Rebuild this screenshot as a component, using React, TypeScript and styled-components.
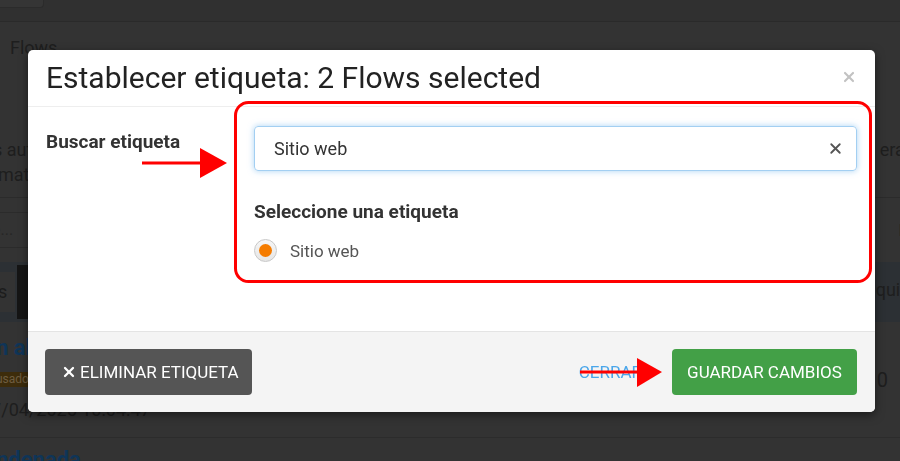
import React from "react";
import styled, { createGlobalStyle } from "styled-components";
import { X } from "lucide-react";

const GlobalStyle = createGlobalStyle`
  html, body { margin: 0; padding: 0; background: #333; }
  body { font-family: Roboto, "Liberation Sans", Arial, sans-serif; }
  * { box-sizing: border-box; }
`;

/* ---------- background page (dimmed behind the dialog) ---------- */
const Page = styled.div`
  width: 900px;
  height: 461px;
  overflow: hidden;
  background: #333;
  color: #1e1e1e;
  font-family: Roboto, "Liberation Sans", sans-serif;
`;
const TopBar = styled.div`
  height: 22px;
  background: #303030;
  border-bottom: 1px solid #2a2a2a;
`;
const TopBarTab = styled.div`
  width: 44px;
  height: 8px;
  background: #353535;
  border-right: 1px solid #2b2b2b;
  border-bottom: 1px solid #2b2b2b;
  border-radius: 0 0 4px 0;
`;
const PageTitle = styled.h1`
  margin: 0;
  padding: 14px 10px 0;
  font-size: 18px;
  font-weight: 400;
  line-height: 24px;
`;
const Intro = styled.div`
  margin-top: 77px;
  padding-bottom: 10px;
  border-bottom: 1px solid #2b2b2b;
`;
const EdgeLine = styled.div`
  display: flex;
  justify-content: space-between;
  height: 25px;
  line-height: 25px;
  font-size: 18px;
  white-space: nowrap;
`;
const EdgeText = styled.span<{ $left?: number; $right?: number }>`
  margin-left: ${(p) => p.$left ?? 0}px;
  margin-right: ${(p) => p.$right ?? 0}px;
`;
const FilterRow = styled.div`
  display: flex;
  justify-content: space-between;
  align-items: center;
  padding: 14px 0;
`;
const FilterInput = styled.div`
  width: 200px;
  height: 36px;
  line-height: 34px;
  border-top: 1px solid #2b2b2b;
  border-bottom: 1px solid #2b2b2b;
  color: #262626;
  font-size: 16px;
  text-indent: -8px;
`;
const ColHead = styled.span`
  font-weight: 700;
  font-size: 17px;
  margin-right: -8px;
`;
const TabsBar = styled.div`
  height: 60px;
  background: #2c3034;
  display: flex;
  justify-content: space-between;
  align-items: center;
`;
const TabGroup = styled.div`
  display: flex;
  align-items: center;
  gap: 2px;
  height: 100%;
  padding: 3px 0;
`;
const Tab = styled.div`
  height: 40px;
  width: 15px;
  background: #333;
  line-height: 40px;
  font-size: 18px;
  color: #1c1c1c;
  overflow: hidden;
  text-indent: -2px;
`;
const DarkTab = styled.div`
  width: 30px;
  height: 100%;
  background: #151515;
`;
const TabRight = styled.span`
  font-size: 18px;
  margin-right: -22px;
  margin-top: -6px;
`;
const FlowRow = styled.div`
  height: 116px;
  display: flex;
  justify-content: space-between;
  align-items: center;
  border-bottom: 1px solid #2c2c2c;
`;
const FlowInfo = styled.div`
  display: flex;
  flex-direction: column;
  align-items: flex-start;
  align-self: flex-start;
  white-space: nowrap;
`;
const FlowName = styled.div<{ $top?: number }>`
  margin-top: ${(p) => p.$top ?? 13}px;
  font-size: 22px;
  font-weight: 700;
  line-height: 26px;
  color: #0f3558;
  text-indent: -4px;
`;
const Badge = styled.span`
  margin-top: 11px;
  height: 15px;
  width: 60px;
  background: #3d2c0b;
  color: #6e5d40;
  font-size: 12px;
  line-height: 15px;
  text-indent: -4px;
  overflow: hidden;
`;
const DateText = styled.div`
  margin-top: 12px;
  font-size: 18px;
  line-height: 22px;
  margin-left: -19px;
`;
const Count = styled.span`
  font-size: 20px;
  margin-right: 12px;
`;
const NextRow = styled.div``;

/* ---------- dialog ---------- */
const Modal = styled.div`
  position: fixed;
  left: 28px;
  top: 50px;
  width: 847px;
  background: #fff;
  border-radius: 5px;
  box-shadow: 0 3px 10px rgba(0, 0, 0, 0.5);
  overflow: hidden;
  color: #333;
`;
const Header = styled.div`
  height: 57px;
  padding: 0 18px 0 18px;
  display: flex;
  align-items: center;
  justify-content: space-between;
  border-bottom: 1px solid #eee;
`;
const Title = styled.h4`
  margin: 0;
  font-size: 30px;
  font-weight: 400;
  line-height: 34px;
  color: #222;
`;
const CloseBtn = styled.button`
  border: 0;
  background: none;
  padding: 0;
  color: #c2c2c2;
  display: flex;
  margin-top: -2px;
`;
const Body = styled.div`
  padding: 19px 18px 69px;
  display: grid;
  grid-template-columns: 208px 1fr;
`;
const FieldLabel = styled.label`
  margin-top: 4px;
  font-size: 19px;
  font-weight: 700;
  line-height: 24px;
  color: #333;
`;
const Field = styled.div`
  display: flex;
  flex-direction: column;
`;
const SearchBox = styled.div`
  height: 45px;
  border: 1px solid #a3cff2;
  border-radius: 4px;
  box-shadow: 0 0 6px rgba(102, 175, 233, 0.55);
  display: flex;
  align-items: center;
  padding: 0 12px 0 19px;
`;
const SearchInput = styled.input`
  flex: 1;
  border: 0;
  outline: none;
  font-family: Roboto, "Liberation Sans", sans-serif;
  font-size: 18px;
  color: #333;
  background: transparent;
  padding: 0;
`;
const ClearBtn = styled.button`
  border: 0;
  background: none;
  padding: 0;
  color: #555;
  display: flex;
`;
const SectionTitle = styled.div`
  margin-top: 29px;
  font-size: 19px;
  font-weight: 700;
  line-height: 24px;
  color: #333;
`;
const RadioRow = styled.label`
  margin-top: 15px;
  display: flex;
  align-items: center;
  gap: 13px;
  font-size: 17px;
  color: #555;
`;
const RadioOuter = styled.span`
  width: 23px;
  height: 23px;
  border-radius: 50%;
  border: 1px solid #c8c8c8;
  background: linear-gradient(#f6f6f6, #e6e6e6);
  display: flex;
  align-items: center;
  justify-content: center;
`;
const RadioDot = styled.span`
  width: 13px;
  height: 13px;
  border-radius: 50%;
  background: #f57c00;
`;
const Footer = styled.div`
  background: #f4f4f4;
  border-top: 1px solid #e4e4e4;
  padding: 17px 18px 17px 17px;
  display: flex;
  justify-content: space-between;
  align-items: center;
`;
const Button = styled.button<{ $variant: "dark" | "green" }>`
  height: 46px;
  border: 0;
  border-radius: 4px;
  padding: ${(p) => (p.$variant === "dark" ? "0 10px 0 16px" : "0 10px")};
  width: ${(p) => (p.$variant === "dark" ? "207px" : "185px")};
  background: ${(p) => (p.$variant === "dark" ? "#555" : "#43a047")};
  color: #fff;
  font-family: Roboto, "Liberation Sans", sans-serif;
  font-size: 17px;
  font-weight: 400;
  text-transform: uppercase;
  display: flex;
  align-items: center;
  justify-content: ${(p) => (p.$variant === "dark" ? "flex-start" : "center")};
  gap: 3px;
  white-space: nowrap;
`;
const RightActions = styled.div`
  display: flex;
  align-items: center;
`;
const LinkBtn = styled.button`
  border: 0;
  background: none;
  padding: 0;
  margin-right: 30px;
  color: #4aa6ea;
  font-family: Roboto, "Liberation Sans", sans-serif;
  font-size: 17px;
  text-transform: uppercase;
`;

/* ---------- red annotations drawn on the screenshot ---------- */
const Annotations = styled.svg`
  position: fixed;
  left: 0;
  top: 0;
  pointer-events: none;
`;

export default function App() {
  return (
    <>
      <GlobalStyle />
      <Page>
        <TopBar>
          <TopBarTab />
        </TopBar>
        <PageTitle>Flows</PageTitle>
        <Intro>
          <EdgeLine>
            <EdgeText $left={-7}>s automatizan</EdgeText>
            <EdgeText $right={-14}>eras</EdgeText>
          </EdgeLine>
          <EdgeLine>
            <EdgeText $left={-2}>matizadas</EdgeText>
          </EdgeLine>
        </Intro>
        <FilterRow>
          <FilterInput>e...</FilterInput>
          <ColHead>F</ColHead>
        </FilterRow>
        <TabsBar>
          <TabGroup>
            <Tab>s</Tab>
            <DarkTab />
          </TabGroup>
          <TabRight>quitar</TabRight>
        </TabsBar>
        <FlowRow>
          <FlowInfo>
            <FlowName>n al</FlowName>
            <Badge>usado</Badge>
            <DateText>07/04/2025 10:04:47</DateText>
          </FlowInfo>
          <Count>0</Count>
        </FlowRow>
        <NextRow>
          <FlowName $top={9}>ndenada</FlowName>
        </NextRow>
      </Page>

      <Modal role="dialog">
        <Header>
          <Title>Establecer etiqueta: 2 Flows selected</Title>
          <CloseBtn aria-label="Cerrar">
            <X size={16} strokeWidth={3.2} />
          </CloseBtn>
        </Header>
        <Body>
          <FieldLabel>Buscar etiqueta</FieldLabel>
          <Field>
            <SearchBox>
              <SearchInput defaultValue="Sitio web" />
              <ClearBtn aria-label="Limpiar">
                <X size={17} strokeWidth={2.6} />
              </ClearBtn>
            </SearchBox>
            <SectionTitle>Seleccione una etiqueta</SectionTitle>
            <RadioRow>
              <RadioOuter>
                <RadioDot />
              </RadioOuter>
              Sitio web
            </RadioRow>
          </Field>
        </Body>
        <Footer>
          <Button $variant="dark">
            <X size={16} strokeWidth={3.4} />
            Eliminar etiqueta
          </Button>
          <RightActions>
            <LinkBtn>Cerrar</LinkBtn>
            <Button $variant="green">Guardar cambios</Button>
          </RightActions>
        </Footer>
      </Modal>

      <Annotations width="900" height="461" viewBox="0 0 900 461">
        <rect x="235.5" y="102.5" width="635" height="179" rx="13" fill="none" stroke="#f00" strokeWidth="3" />
        <line x1="142" y1="163" x2="204" y2="163" stroke="#f00" strokeWidth="3" />
        <polygon points="200,148 227,163 200,178" fill="#f00" />
        <line x1="580" y1="372" x2="640" y2="372" stroke="#f00" strokeWidth="3" />
        <polygon points="637,358 662,372 637,387" fill="#f00" />
      </Annotations>
    </>
  );
}
